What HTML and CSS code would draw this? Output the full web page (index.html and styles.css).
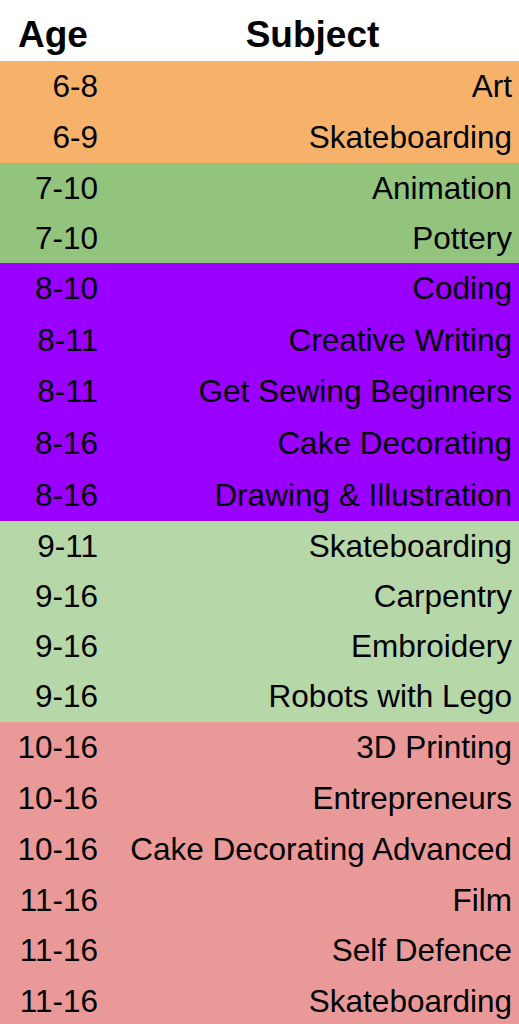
FILE: index.html
```html
<!DOCTYPE html>
<html>
<head>
<meta charset="utf-8">
<link rel="stylesheet" href="styles.css">
</head>
<body>
<table class="schedule">
  <thead>
    <tr class="head"><th class="age">Age</th><th class="subject">Subject</th></tr>
  </thead>
  <tbody>
    <tr class="orange"><td class="age">6-8</td><td class="subject">Art</td></tr>
    <tr class="orange"><td class="age">6-9</td><td class="subject">Skateboarding</td></tr>
    <tr class="green"><td class="age">7-10</td><td class="subject">Animation</td></tr>
    <tr class="green"><td class="age">7-10</td><td class="subject">Pottery</td></tr>
    <tr class="purple"><td class="age">8-10</td><td class="subject">Coding</td></tr>
    <tr class="purple"><td class="age">8-11</td><td class="subject">Creative Writing</td></tr>
    <tr class="purple"><td class="age">8-11</td><td class="subject">Get Sewing Beginners</td></tr>
    <tr class="purple"><td class="age">8-16</td><td class="subject">Cake Decorating</td></tr>
    <tr class="purple"><td class="age">8-16</td><td class="subject">Drawing &amp; Illustration</td></tr>
    <tr class="lightgreen"><td class="age">9-11</td><td class="subject">Skateboarding</td></tr>
    <tr class="lightgreen"><td class="age">9-16</td><td class="subject">Carpentry</td></tr>
    <tr class="lightgreen"><td class="age">9-16</td><td class="subject">Embroidery</td></tr>
    <tr class="lightgreen"><td class="age">9-16</td><td class="subject">Robots with Lego</td></tr>
    <tr class="red"><td class="age">10-16</td><td class="subject">3D Printing</td></tr>
    <tr class="red"><td class="age">10-16</td><td class="subject">Entrepreneurs</td></tr>
    <tr class="red"><td class="age">10-16</td><td class="subject">Cake Decorating Advanced</td></tr>
    <tr class="red"><td class="age">11-16</td><td class="subject">Film</td></tr>
    <tr class="red"><td class="age">11-16</td><td class="subject">Self Defence</td></tr>
    <tr class="red"><td class="age">11-16</td><td class="subject">Skateboarding</td></tr>
  </tbody>
</table>
</body>
</html>
```

FILE: styles.css
```css
html, body {
  margin: 0;
  padding: 0;
  background: #ffffff;
}

.schedule {
  width: 519px;
  border-collapse: collapse;
  border-spacing: 0;
  table-layout: fixed;
  font-family: "Liberation Sans", Arial, sans-serif;
  color: #000;
}

.schedule th,
.schedule td {
  padding: 0;
  white-space: nowrap;
  overflow: visible;
}

.head th {
  height: 61px;
  font-size: 37px;
  font-weight: bold;
  text-align: center;
  vertical-align: top;
  line-height: 37px;
  padding-top: 16px;
  box-sizing: border-box;
}

.head .age { width: 106px; }

tbody td {
  font-size: 31.5px;
  line-height: 31px;
  box-sizing: border-box;
  padding-top: 5px;
  vertical-align: middle;
}

tbody td.age {
  text-align: right;
  padding-right: 8px;
}

tbody td.subject {
  text-align: right;
  padding-right: 7px;
}

.orange { background: #f6b26b; height: 51px; }
.green { background: #93c47d; height: 50px; }
.purple { background: #9900ff; height: 51.6px; }
.lightgreen { background: #b6d7a8; height: 50.25px; }
.red { background: #ea9999; height: 50.9px; }
```
